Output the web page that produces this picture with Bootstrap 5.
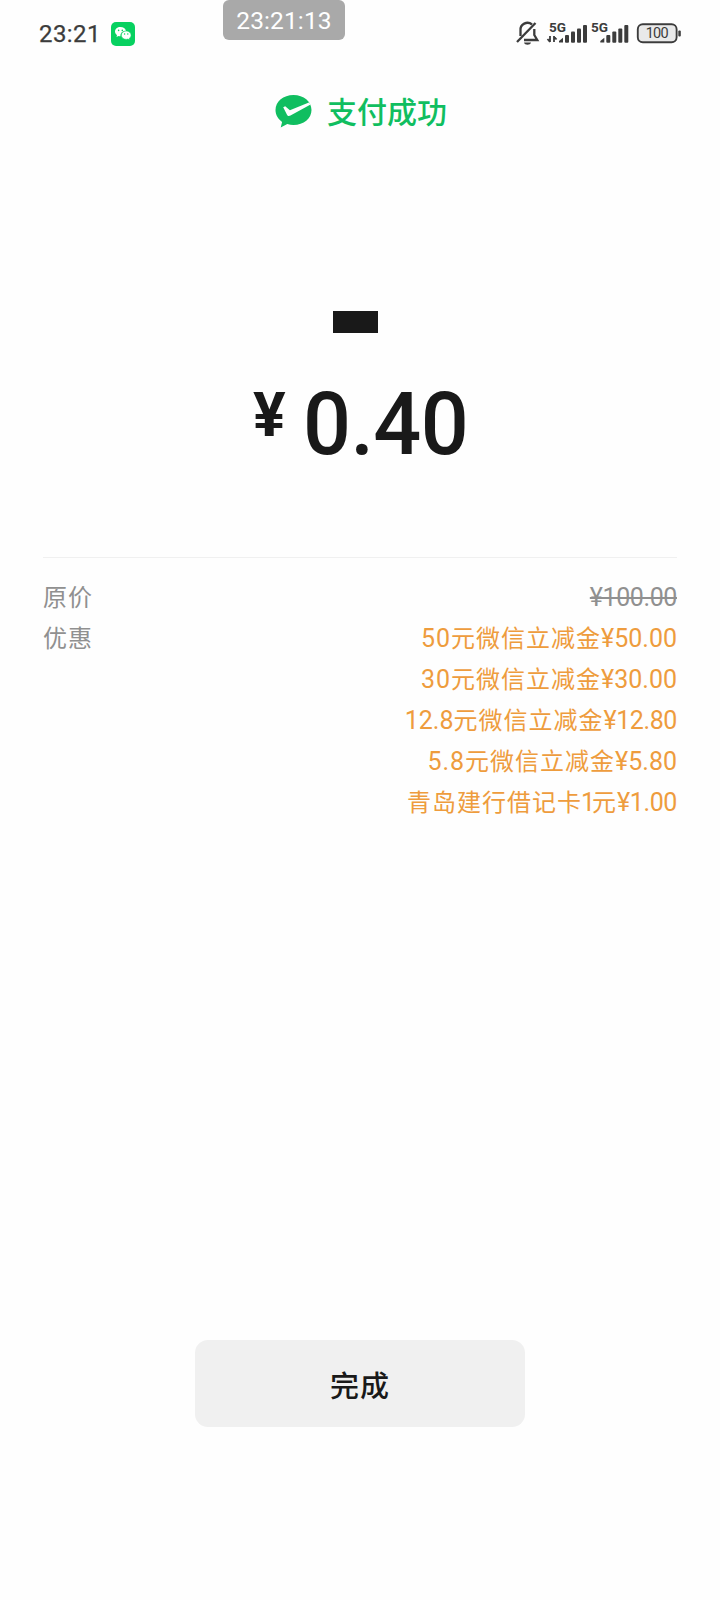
<!DOCTYPE html>
<html lang="zh-CN">
<head>
<meta charset="utf-8">
<meta name="viewport" content="width=device-width, initial-scale=1">
<title>支付成功</title>
<link href="https://cdn.jsdelivr.net/npm/bootstrap@5.3.0/dist/css/bootstrap.min.css" rel="stylesheet">
<style>
body{background:#fefefe;font-family:Roboto,"Noto Sans CJK SC",sans-serif;color:#191919}
.phone{width:720px;height:1600px}
.status{height:67px;padding:0 38px 0 39px;color:#3c3c3c}
.clock{font-size:24px;line-height:28px;letter-spacing:.4px;-webkit-text-stroke:.25px #3c3c3c}
.chat{margin-left:10px}
.timer{left:223px;top:0;width:122px;height:40px;background:#a9a9a9;border-radius:6px;color:#fff;font-size:24.5px;line-height:41px;letter-spacing:.1px}
.success{height:88px;color:#10be60;padding-left:2px}
.success span{font-size:30px;line-height:44px;font-weight:500;padding-top:3px;margin-left:15px}
.redact{width:45px;height:22px;background:#191919;margin:156px 0 0 333px}
.sum{margin:39px 0 0 253px;height:104px;font-weight:500}
.yen{font-size:61px;line-height:70px;margin-top:8px;width:50px;font-weight:700}
.digits{font-size:88px;line-height:104px;letter-spacing:-.6px;transform:scaleX(.96);transform-origin:0 50%}
.detail{margin:81px 43px 0 43px;border-top:1px solid #f0f0f0;padding-top:19px;font-size:25px}
.line{height:41px;line-height:41px;white-space:nowrap}
.grey{color:#909090}
.deal{color:#ee9c3d}
.cn{font-size:24px;letter-spacing:1px}
.label-cn{position:relative;top:1px}
.wide{letter-spacing:1px}
.tight{letter-spacing:-.4px}
.one{letter-spacing:-3px;margin-left:-1px}
.done{margin:auto 195px 173px;height:87px;background:#f0f0f0;border-radius:13px;font-size:29px;font-weight:500;letter-spacing:1px;color:#191919;padding-top:14px}
</style>
</head>
<body>
<main class="phone position-relative d-flex flex-column overflow-hidden">
<header class="status d-flex align-items-center justify-content-between">
<div class="d-flex align-items-center"><span class="clock">23:21</span>
<svg class="chat" width="24" height="24" viewBox="0 0 24 24"><rect width="24" height="24" rx="5" fill="#07d160"/><path fill="#fff" d="M9.400 5C6.300 5 4 7 4 9.600c0 1.500.8 2.700 2 3.600l-.5 1.700 2-1c.7.2 1.300.3 2 .3C9.200 10.700 11.500 9 15 9 14.500 6.600 12.300 5 9.400 5Z"/><path fill="#fff" stroke="#07d160" stroke-width=".6" d="M15.200 9c-2.800 0-4.900 1.900-4.900 4.200s2.100 4.200 4.900 4.200c.6 0 1.200-.1 1.700-.3l1.700 1-.4-1.600c1.200-.8 1.900-2 1.900-3.300C20.100 10.900 18 9 15.200 9Z"/><g fill="#07d160"><circle cx="7.600" cy="8.400" r=".8"/><circle cx="11.300" cy="8.400" r=".8"/><circle cx="13.600" cy="12" r=".7"/><circle cx="16.800" cy="12" r=".7"/></g></svg></div>
<svg width="170" height="32" viewBox="512 18 170 32" fill="#3c3c3c"><g fill="none" stroke="#3c3c3c" stroke-width="2.300"><path d="m517 42 18.500-19"/><path d="M520.500 36v-5.500a7 7 0 0 1 11.500-6"/><path d="M534.300 29v6l3 5H524"/></g><path d="M524 42.500h7c-.6 3-6.400 3-7 0Z"/>
<g font-family="Roboto,sans-serif" font-weight="700" font-size="12"><text x="549" y="32" textLength="17" lengthAdjust="spacingAndGlyphs">5G</text><text x="591" y="32" textLength="17" lengthAdjust="spacingAndGlyphs">5G</text></g>
<path d="M550 36v6M547.500 39l2.500 3M554 42v-6M554 36.500l2.500 3" stroke="#3c3c3c" stroke-width="1.800" fill="none"/>
<g id="bars"><path d="M559 42.500v-1.500l4-3.200v4.700Z"/><rect x="565" y="35" width="4" height="7.700" rx="1"/><rect x="571" y="31.500" width="4" height="11.200" rx="1"/><rect x="577" y="28.500" width="4" height="14.200" rx="1"/><rect x="583" y="25" width="4" height="17.700" rx="1"/></g><use href="#bars" x="41.300"/>
<rect x="638" y="24.500" width="38.500" height="17.500" rx="4.500" fill="#e9e9e9" stroke="#fff" stroke-width="2"/><rect x="637.800" y="24.300" width="38.800" height="17.900" rx="5" fill="none" stroke="#3c3c3c" stroke-width="1.900"/><rect x="678.300" y="30.500" width="2.500" height="6" rx="1"/><text x="657.200" y="38.300" text-anchor="middle" font-size="14.500" textLength="23" font-family="Roboto,sans-serif">100</text></svg>
</header>
<div class="timer position-absolute text-center">23:21:13</div>
<section class="success d-flex align-items-center justify-content-center">
<svg width="37" height="33" viewBox="0 0 37 33"><path fill="#10be60" d="M18.500 0C8.300 0 .5 6.500.5 15c0 5 2.600 9.200 6.600 11.900L5.700 32.500l6.600-3.400c2 .6 4 .9 6.200.9C28.700 30 36.500 23.500 36.500 15S28.700 0 18.500 0Z"/><path fill="#fefefe" d="m8.200 12.300 2-1 4.700 4 19-7.900 1.700 2-20.100 11.200c-1.400.8-2.800.7-3.500-.8Z"/></svg>
<span>支付成功</span></section>
<div class="redact"></div>
<section class="sum d-flex align-items-start"><span class="yen">¥</span><span class="digits">0.40</span></section>
<section class="detail">
<div class="line d-flex justify-content-between grey"><span class="cn label-cn">原价</span><s class="tight">¥100.00</s></div>
<div class="line d-flex justify-content-between"><span class="cn label-cn grey">优惠</span><span class="deal"><span class="wide">50</span><span class="cn">元微信立减金</span>¥50.00</span></div>
<div class="line text-end deal"><span class="wide">30</span><span class="cn">元微信立减金</span>¥30.00</div>
<div class="line text-end deal"><span>12.8</span><span class="cn">元微信立减金</span><span class="tight">¥12.80</span></div>
<div class="line text-end deal"><span class="wide">5.8</span><span class="cn">元微信立减金</span>¥5.80</div>
<div class="line text-end deal"><span class="cn">青岛建行借记卡</span><span class="one">1</span><span class="cn">元</span><span class="tight">¥1.00</span></div>
</section>
<button class="done btn border-0" type="button">完成</button>
</main>
<script src="https://cdn.jsdelivr.net/npm/bootstrap@5.3.0/dist/js/bootstrap.bundle.min.js"></script>
</body>
</html>
